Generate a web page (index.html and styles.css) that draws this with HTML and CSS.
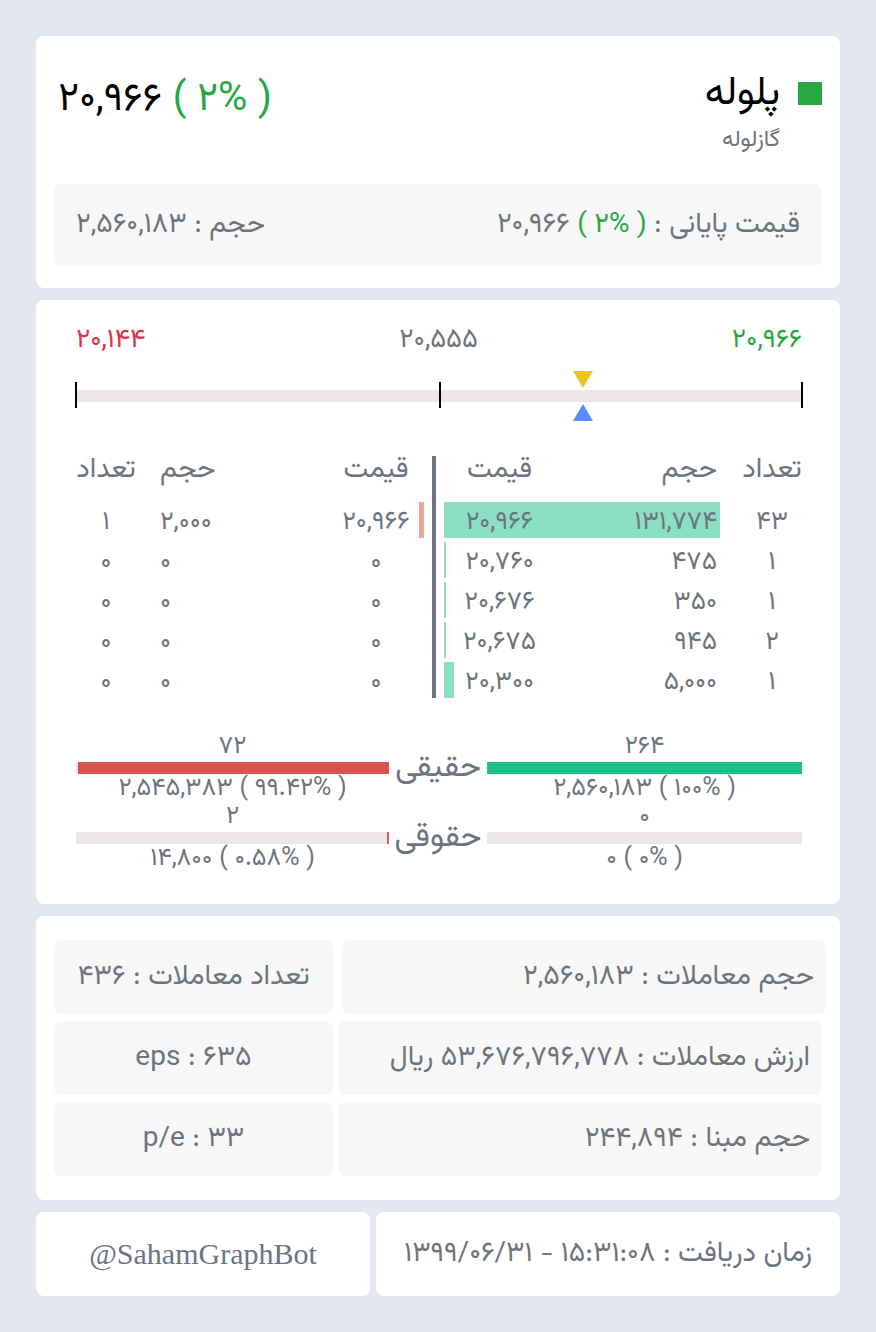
FILE: index.html
```html
<!DOCTYPE html>
<html lang="fa" dir="rtl">
<head>
  <meta charset="utf-8" />
  <title>پلوله</title>
  <link rel="stylesheet" href="styles.css">
</head>
<body>
  <div class="card head-card">
    <div class="head">
      <div class="name">
        <div class="title"><span class="dot"></span><h1>پلوله</h1></div>
        <div class="sub">گازلوله</div>
      </div>
      <div class="price"><span class="up">( ۲% )</span> ۲۰,۹۶۶</div>
    </div>
    <div class="box summary">
      <span>قیمت پایانی : <bdi dir="rtl"><span class="up">( ۲% )</span> ۲۰,۹۶۶</bdi></span>
      <span>حجم : ۲,۵۶۰,۱۸۳</span>
    </div>
  </div>

  <div class="card mid-card">
    <div class="range">
      <span class="up">۲۰,۹۶۶</span>
      <span>۲۰,۵۵۵</span>
      <span class="down">۲۰,۱۴۴</span>
    </div>
    <div class="slider">
      <div class="track">
        <i class="tick t-start"></i>
        <i class="tick t-mid"></i>
        <i class="tick t-end"></i>
        <b class="mark last" style="left:69.8%"></b>
        <b class="mark close" style="left:69.8%"></b>
      </div>
    </div>

    <div class="book">
      <div class="side buy">
        <div class="row hdr"><span>تعداد</span><span>حجم</span><span>قیمت</span></div>
        <div class="row" style="--w:77.1%"><span>۴۳</span><span>۱۳۱,۷۷۴</span><span>۲۰,۹۶۶</span></div>
        <div class="row" style="--w:0.6%"><span>۱</span><span>۴۷۵</span><span>۲۰,۷۶۰</span></div>
        <div class="row" style="--w:0.6%"><span>۱</span><span>۳۵۰</span><span>۲۰,۶۷۶</span></div>
        <div class="row" style="--w:0.6%"><span>۲</span><span>۹۴۵</span><span>۲۰,۶۷۵</span></div>
        <div class="row" style="--w:2.8%"><span>۱</span><span>۵,۰۰۰</span><span>۲۰,۳۰۰</span></div>
      </div>
      <div class="divider"></div>
      <div class="side sell">
        <div class="row hdr"><span>قیمت</span><span>حجم</span><span>تعداد</span></div>
        <div class="row" style="--w:1.5%"><span>۲۰,۹۶۶</span><span>۲,۰۰۰</span><span>۱</span></div>
        <div class="row" style="--w:0%"><span>۰</span><span>۰</span><span>۰</span></div>
        <div class="row" style="--w:0%"><span>۰</span><span>۰</span><span>۰</span></div>
        <div class="row" style="--w:0%"><span>۰</span><span>۰</span><span>۰</span></div>
        <div class="row" style="--w:0%"><span>۰</span><span>۰</span><span>۰</span></div>
      </div>
    </div>

    <div class="holders">
      <div class="hrow">
        <div class="hside buy">
          <div>۲۶۴</div>
          <div class="bar" style="--w:100%"></div>
          <div>( ۱۰۰% ) ۲,۵۶۰,۱۸۳</div>
        </div>
        <div class="hlabel">حقیقی</div>
        <div class="hside sell">
          <div>۷۲</div>
          <div class="bar" style="--w:99.42%"></div>
          <div>( ۹۹.۴۲% ) ۲,۵۴۵,۳۸۳</div>
        </div>
      </div>
      <div class="hrow">
        <div class="hside buy">
          <div>۰</div>
          <div class="bar" style="--w:0%"></div>
          <div>( ۰% ) ۰</div>
        </div>
        <div class="hlabel">حقوقی</div>
        <div class="hside sell">
          <div>۲</div>
          <div class="bar" style="--w:0.58%"></div>
          <div>( ۰.۵۸% ) ۱۴,۸۰۰</div>
        </div>
      </div>
    </div>
  </div>

  <div class="card stats">
    <div class="box wide first">حجم معاملات : ۲,۵۶۰,۱۸۳</div>
    <div class="box narrow">تعداد معاملات : ۴۳۶</div>
    <div class="box wide">ارزش معاملات : ۵۳,۶۷۶,۷۹۶,۷۷۸ ریال</div>
    <div class="box narrow" dir="ltr">eps : ۶۳۵</div>
    <div class="box wide">حجم مبنا : ۲۴۴,۸۹۴</div>
    <div class="box narrow" dir="ltr">p/e : ۳۳</div>
  </div>

  <div class="footer">
    <div class="card fcell time">زمان دریافت : ۱۵:۳۱:۰۸ - ۱۳۹۹/۰۶/۳۱</div>
    <div class="card fcell bot" dir="ltr">@SahamGraphBot</div>
  </div>
</body>
</html>
```

FILE: styles.css
```css
    body {
      margin: 0;
      padding: 36px;
      background-color: #e3e7ef;
      font-family: "Vazirmatn", "Vazir", "Noto Sans Arabic", "DejaVu Sans", sans-serif;
      color: #6c757d;
      font-size: 26px;
    }
    .card {
      background-color: white;
      border-radius: 8px;
      margin-bottom: 12px;
    }
    .box {
      background-color: #f7f7f8;
      border-radius: 8px;
    }
    .up { color: #28a745; }
    .down { color: #dc3545; }

    /* header */
    .head-card {
      padding: 36px 18px 22px;
    }
    .head {
      display: flex;
      justify-content: space-between;
      align-items: flex-start;
      padding-left: 4px;
    }
    .title {
      display: flex;
      align-items: center;
      gap: 18px;
    }
    .dot {
      width: 24px;
      height: 23px;
      margin-bottom: 2px;
      background-color: #28a745;
    }
    h1 {
      margin: 0;
      font-size: 40px;
      font-weight: 400;
      line-height: 44px;
      color: black;
    }
    .sub {
      margin: 12px 42px 0 0;
      font-size: 23px;
      line-height: 24px;
    }
    .price {
      margin-top: 4px;
      font-size: 40px;
      line-height: 48px;
      color: black;
    }
    .summary {
      margin-top: 32px;
      height: 82px;
      padding: 0 22px;
      display: flex;
      justify-content: space-between;
      align-items: center;
      font-size: 28px;
    }

    /* range + slider */
    .mid-card {
      padding: 26px 38px 33px 38px;
    }
    .range {
      display: flex;
      justify-content: space-between;
      font-size: 27px;
      line-height: 30px;
      padding: 0 0 0 2px;
    }
    .slider {
      padding: 34px 0 18px 0;
    }
    .track {
      position: relative;
      height: 12px;
      margin-left: 2px;
      background-color: #ebe7e6;
    }
    .tick {
      position: absolute;
      top: -8px;
      width: 2px;
      height: 26px;
      background-color: black;
    }
    .t-start { left: -1px; }
    .t-mid { left: 50%; }
    .t-end { right: -1px; }
    .mark {
      position: absolute;
      width: 0;
      height: 0;
      margin-left: -10px;
      border-left: 10px solid transparent;
      border-right: 10px solid transparent;
    }
    .last {
      top: -19px;
      border-top: 17px solid #f1c21b;
    }
    .close {
      top: 14px;
      border-bottom: 17px solid #5b8cff;
    }

    /* order book */
    .book {
      margin-top: 36px;
      display: flex;
      padding-bottom: 10px;
    }
    .divider {
      width: 4px;
      margin: 0 8px;
      background-color: #6c757d;
    }
    .side {
      display: flex;
      flex-direction: column;
      gap: 4px;
    }
    .row {
      display: grid;
      height: 36px;
      align-items: center;
      background-repeat: no-repeat;
      background-size: var(--w) 100%;
    }
    .row.hdr {
      height: 42px;
      align-items: start;
      line-height: 28px;
      font-size: 28px;
    }
    .buy .row {
      width: 358px;
      grid-template-columns: 80px 167px 111px;
      background-image: linear-gradient(#8ddfc4, #8ddfc4);
      background-position: left center;
    }
    .buy .row span:nth-child(1) { text-align: center; padding-left: 20px; }
    .buy .row span:nth-child(2) { text-align: right; padding-right: 5px; }
    .buy .row span:nth-child(3) { text-align: center; }
    .sell .row {
      width: 348px;
      padding-right: 12px;
      box-sizing: border-box;
      grid-template-columns: 72px 204px 60px;
      background-image: linear-gradient(#eaa6a0, #eaa6a0);
      background-position: right center;
    }
    .sell .row.hdr { background-image: none; }
    .buy .row.hdr { background-image: none; }
    .sell .row span:nth-child(1) { text-align: center; }
    .sell .row span:nth-child(2) { text-align: left; padding-left: 24px; }
    .sell .row span:nth-child(3) { text-align: center; }

    /* holders */
    .holders {
      margin-top: 27px;
      display: flex;
      flex-direction: column;
      gap: 4px;
    }
    .hrow {
      display: grid;
      grid-template-columns: 1fr 98px 1fr;
      align-items: center;
    }
    .hside {
      text-align: center;
      line-height: 24px;
      font-size: 25px;
    }
    .hside.sell { margin-left: 2px; }
    .bar {
      height: 12px;
      margin: 3px 0;
      background-color: #ebe7e6;
      background-repeat: no-repeat;
      background-size: var(--w) 100%;
    }
    .buy .bar {
      background-image: linear-gradient(#1dbf8a, #1dbf8a);
      background-position: left center;
    }
    .sell .bar {
      background-image: linear-gradient(#d9534f, #d9534f);
      background-position: right center;
    }
    .hlabel {
      text-align: center;
      font-size: 32px;
      line-height: 40px;
    }

    /* stats */
    .stats {
      padding: 24px 18px;
      display: grid;
      grid-template-columns: 1fr 279px;
      column-gap: 5px;
      row-gap: 7px;
      font-size: 28px;
    }
    .stats .box {
      height: 74px;
      display: flex;
      align-items: center;
    }
    .stats .wide {
      padding-right: 12px;
    }
    .stats .first {
      margin: 0 -4px 0 4px;
    }
    .stats .narrow {
      justify-content: center;
    }

    /* footer */
    .footer {
      display: flex;
      gap: 6px;
    }
    .fcell {
      height: 84px;
      margin-bottom: 0;
      display: flex;
      align-items: center;
      font-size: 28px;
    }
    .time {
      flex: 1;
      padding-right: 28px;
    }
    .bot {
      width: 334px;
      justify-content: center;
      font-family: "Liberation Serif", serif;
      font-size: 30px;
    }
```
